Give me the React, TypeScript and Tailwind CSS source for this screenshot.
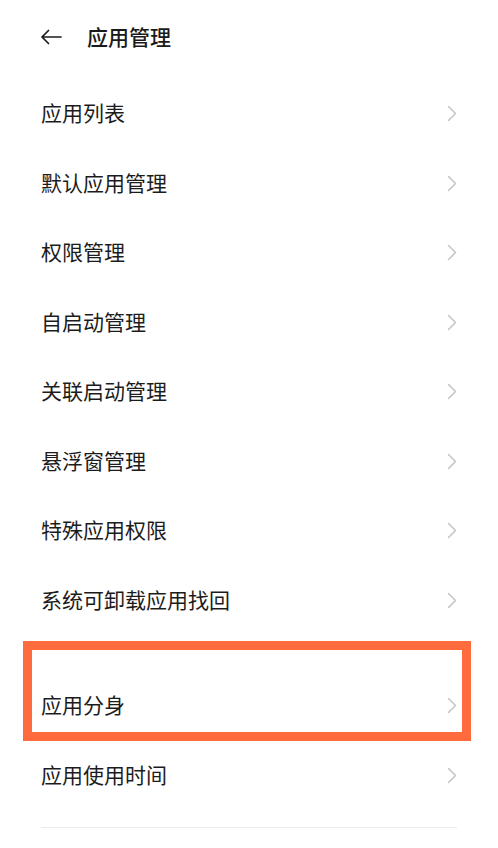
import React from "react";

const Chevron = () => (
  <svg width="10" height="17" viewBox="0 0 10 17" fill="none">
    <path d="M1.5 1.5 L8.5 8.5 L1.5 15.5" stroke="#c6c6c6" strokeWidth="1.6" strokeLinecap="round" strokeLinejoin="round" />
  </svg>
);

const Row = ({ label }: { label: string }) => (
  <div className="h-[69.5px] flex items-center justify-between">
    <span className="text-[21px] leading-[28px] text-[#1c1c1c] mb-[3px]">{label}</span>
    <Chevron />
  </div>
);

export default function App() {
  const items = [
    "应用列表",
    "默认应用管理",
    "权限管理",
    "自启动管理",
    "关联启动管理",
    "悬浮窗管理",
    "特殊应用权限",
    "系统可卸载应用找回",
  ];
  return (
    <div
      className="w-[498px] h-[848px] bg-white overflow-hidden"
      style={{ fontFamily: '"Noto Sans CJK SC", "Noto Sans", sans-serif' }}
    >
      <div className="h-[79px] pl-[40px] pt-[22px] flex items-start">
        <div className="h-[28px] flex items-center">
          <svg width="22" height="16" viewBox="0 0 22 16" fill="none" className="mt-[1px]">
            <path d="M21 8 H2 M8.5 1.5 L2 8 L8.5 14.5" stroke="#1c1c1c" strokeWidth="1.7" strokeLinecap="round" strokeLinejoin="round" />
          </svg>
          <span className="ml-[25px] text-[21px] leading-[28px] font-medium text-[#1a1a1a]">应用管理</span>
        </div>
      </div>
      <div className="px-[41px]">
        {items.map((t) => (
          <Row key={t} label={t} />
        ))}
        <div className="relative pt-[36px]">
          <div className="absolute top-[6px] bottom-[0px] left-[-18px] right-[-14px] border-[9.5px] border-[#ff6b3d] pointer-events-none" />
          <Row label="应用分身" />
        </div>
        <Row label="应用使用时间" />
        <div className="mt-[16.5px] h-px bg-[#ececec]" />
      </div>
    </div>
  );
}
